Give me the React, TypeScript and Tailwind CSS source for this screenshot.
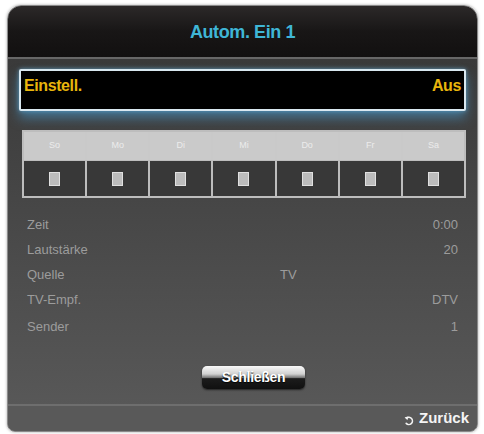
const days = ["So", "Mo", "Di", "Mi", "Do", "Fr", "Sa"];

const rows: { label: string; value: string; center?: boolean }[] = [
  { label: "Zeit", value: "0:00" },
  { label: "Lautstärke", value: "20" },
  { label: "Quelle", value: "TV", center: true },
  { label: "TV-Empf.", value: "DTV" },
  { label: "Sender", value: "1" },
];

function ReturnIcon() {
  return (
    <svg width="11" height="11" viewBox="0 0 11 11" className="mt-[3px]">
      <path
        d="M2.5 3.2 A3.6 3.6 0 1 1 2.2 8.4"
        fill="none"
        stroke="#f2f2f2"
        strokeWidth="1.6"
        strokeLinecap="round"
      />
      <path d="M0.6 2.2 L4.4 1.6 L3.4 5.2 Z" fill="#f2f2f2" />
    </svg>
  );
}

export default function App() {
  return (
    <div className="w-[484px] h-[434px] bg-white pt-[5px] pl-[7px] font-['Liberation_Sans',Arial,sans-serif]">
      <div className="w-[471px] h-[427px] flex flex-col rounded-t-[14px] rounded-b-[8px] overflow-hidden border border-[#8a8a8a] shadow-[0_0_3px_rgba(0,0,0,0.35)]">
        {/* Header */}
        <div className="h-[51px] shrink-0 flex items-center justify-center bg-gradient-to-b from-[#2c2929] via-[#181616] to-[#121010]">
          <span className="text-[18px] font-bold text-[#3fb6d6] tracking-[-0.4px] mt-[2px]">Autom. Ein 1</span>
        </div>
        <div className="h-[2px] shrink-0 bg-[#676767]" />

        {/* Body */}
        <div className="flex-1 flex flex-col bg-gradient-to-b from-[#3a3a3a] via-[#4a4a4a] to-[#5a5a5a]">
          <div className="mt-[10px] mx-[11px] h-[42px] flex items-center justify-between px-[3px] pb-[8px] bg-black border-2 border-[#d9e8f0] rounded-[2px] shadow-[0_7px_12px_rgba(70,150,200,0.6),0_0_4px_rgba(120,190,230,0.7)]">
            <span className="text-[16px] font-bold text-[#e9b50c] tracking-[-0.4px]">Einstell.</span>
            <span className="text-[16px] font-bold text-[#e9b50c] tracking-[-0.4px]">Aus</span>
          </div>

          <div className="mt-[19px] ml-[14px] mr-[11px] border-2 border-[#bdbdbd] bg-[#bdbdbd]">
            <div className="grid grid-cols-7 gap-x-[2px] bg-[#c9c9c9]">
              {days.map((d) => (
                <div key={d} className="h-[28px] flex items-center justify-center bg-[#cacaca] text-[9px] text-[#ececec]">
                  {d}
                </div>
              ))}
            </div>
            <div className="grid grid-cols-7 gap-x-[2px] mt-[1px]">
              {days.map((d) => (
                <div key={d} className="h-[35px] flex items-center justify-center bg-[#383838]">
                  <div className="w-[11px] h-[14px] bg-[#bcbcbc] border border-[#e0e0e0]" />
                </div>
              ))}
            </div>
          </div>

          <div className="mt-[15px] ml-[19px] mr-[19px] flex flex-col">
            {rows.map((r, i) => (
              <div
                key={r.label}
                className={`flex items-center text-[13px] text-[#9c9c9c] ${i === 0 ? "h-[24px]" : i === 4 ? "h-[30px]" : "h-[25px]"}`}
              >
                <span className="w-[200px]">{r.label}</span>
                {r.center ? (
                  <span className="ml-[53px]">{r.value}</span>
                ) : (
                  <span className="ml-auto">{r.value}</span>
                )}
              </div>
            ))}
          </div>

          <div className="mt-[24px] flex justify-center pl-[22px]">
            <div className="w-[103px] h-[23px] rounded-[5px] flex items-center justify-center bg-[linear-gradient(to_bottom,#fafafa_0%,#d0d0d0_35%,#7a7a7a_50%,#1c1c1c_55%,#101010_100%)] shadow-[0_1px_2px_rgba(0,0,0,0.6)]">
              <span className="text-[14px] font-bold text-white tracking-[-0.3px] [text-shadow:0_1px_1px_rgba(0,0,0,0.9)]">Schließen</span>
            </div>
          </div>

          <div className="mt-auto h-[2px] bg-[#6e6e6e]" />
          <div className="h-[25px] flex items-center justify-end gap-[4px] pr-[8px] bg-[#595959]">
            <ReturnIcon />
            <span className="text-[15px] font-bold text-[#f4f4f4]">Zurück</span>
          </div>
        </div>
      </div>
    </div>
  );
}
